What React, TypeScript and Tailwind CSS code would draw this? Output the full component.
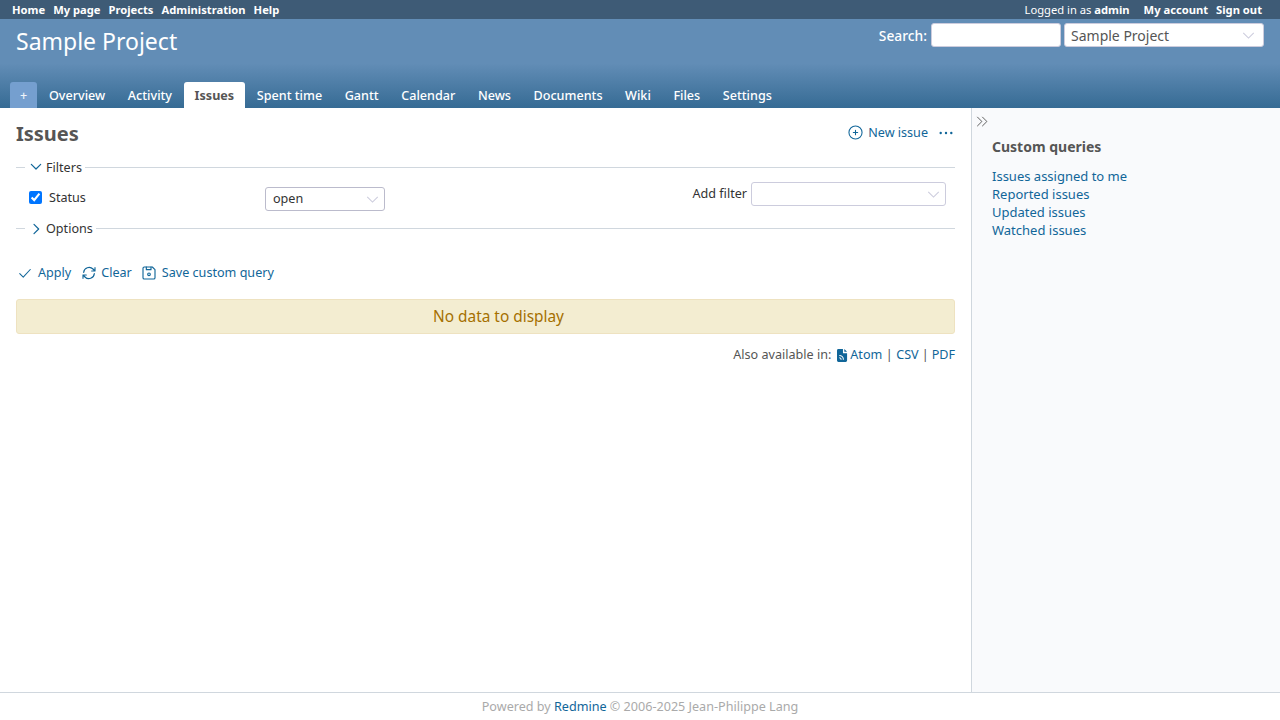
import React from "react";

const Chev = ({ d, className, w = "1.8" }: { d: string; className: string; w?: string }) => (
  <svg viewBox="0 0 24 24" fill="none" stroke="currentColor" strokeWidth={w} strokeLinecap="round" strokeLinejoin="round" className={className}>
    <path d={d} />
  </svg>
);

const tabs = ["Overview", "Activity", "Issues", "Spent time", "Gantt", "Calendar", "News", "Documents", "Wiki", "Files", "Settings"];

const SelectBox = ({ label, className }: { label: string; className: string }) => (
  <div className={`flex items-center justify-between rounded-[3px] border bg-white ${className}`}>
    <span>{label}</span>
    <svg viewBox="0 0 14 8" fill="none" stroke="#ccccdd" strokeWidth="1.2" className="h-[7px] w-[13px]">
      <path d="M1 1l6 6 6-6" />
    </svg>
  </div>
);

export default function App() {
  return (
    <div className="flex h-[720px] w-[1280px] flex-col overflow-hidden bg-white font-['Noto_Sans',sans-serif] text-[12.6px] text-[#333]">
      <div className="flex h-[19px] shrink-0 items-center justify-between bg-[#3e5b76] pl-3 pr-[18px] text-[11.2px] leading-[19px] text-white">
        <div className="flex gap-2 font-bold">
          <span>Home</span>
          <span>My page</span>
          <span>Projects</span>
          <span>Administration</span>
          <span>Help</span>
        </div>
        <div className="flex">
          <span>Logged in as <b>admin</b></span>
          <span className="ml-[14px] font-bold">My account</span>
          <span className="ml-[8px] font-bold">Sign out</span>
        </div>
      </div>

      <div className="flex h-[89px] shrink-0 flex-col justify-between bg-[linear-gradient(180deg,#628db6_0%,#628db6_50%,#366b94_100%)]">
        <div className="flex items-start justify-between pl-4 pr-4">
          <div className="mt-[3px] text-[23px] leading-[38px] text-white">Sample Project</div>
          <div className="mt-1 flex items-center text-[14px]">
            <span className="relative top-px mr-1 text-[13.8px] font-medium text-white">Search:</span>
            <div className="h-6 w-[130px] rounded-[3px] border border-[#ccd] bg-white" />
            <SelectBox label="Sample Project" className="ml-[3px] h-6 w-[200px] border-[#ccd] pl-1.5 pr-[8px] text-[#555]" />
          </div>
        </div>
        <div className="flex h-[26px] pl-2.5 text-[12.6px] leading-[27px] font-medium text-white">
          <div className="mr-0.5 w-[27px] rounded-t-[3px] bg-[#759fcf] text-center text-[#f0f4fa]">+</div>
          {tabs.map((t) =>
            t === "Issues" ? (
              <div key={t} className="-ml-px mr-[1.6px] rounded-t-[3px] bg-white px-[11px] font-bold text-[#555]">{t}</div>
            ) : (
              <div key={t} className="mr-[2.6px] px-2.5">{t}</div>
            )
          )}
        </div>
      </div>

      <div className="flex min-h-0 flex-1">
        <div className="w-[971px] shrink-0 px-4 pt-[10px]">
          <div className="flex h-8 items-center justify-between">
            <h2 className="text-[20px] font-bold text-[#555]">Issues</h2>
            <div className="relative -top-px mr-0.5 flex items-center text-[#169]">
              <svg viewBox="0 0 24 24" fill="none" stroke="currentColor" strokeWidth="1.7" strokeLinecap="round" className="mr-[5px] h-[15px] w-[15px]">
                <circle cx="12" cy="12" r="10.5" />
                <path d="M12 8.5v7M8.5 12h7" />
              </svg>
              <span>New issue</span>
              <svg viewBox="0 0 14 4" fill="currentColor" className="ml-[11px] h-[4px] w-[14px]">
                <circle cx="1.700" cy="2" r="1.200" />
                <circle cx="7" cy="2" r="1.200" />
                <circle cx="12.300" cy="2" r="1.200" />
              </svg>
            </div>
          </div>

          <div className="mt-[8px] flex h-[18px] items-center">
            <div className="h-px w-[9px] bg-[#d0d7de]" />
            <Chev d="M5 8l7 7 7-7" className="ml-[3px] h-[16px] w-[16px] text-[#169]" />
            <span className="relative top-px ml-[2px] mr-[3px]">Filters</span>
            <div className="h-px flex-1 bg-[#d0d7de]" />
          </div>
          <div className="mt-[4px] flex h-[39px] items-start pl-[13px] pr-[9px]">
            <div className="mt-[8px] flex w-[236px] items-center">
              <input type="checkbox" defaultChecked className="h-[13px] w-[13px] accent-[#0075ff]" />
              <span className="relative top-px ml-[7px]">Status</span>
            </div>
            <SelectBox label="open" className="mt-[7px] h-6 w-[120px] border-[#bbbbcc] pl-[7px] pr-[5px]" />
            <div className="flex-1" />
            <div className="mt-[2px] flex items-center">
              <span className="mr-1">Add filter</span>
              <SelectBox label="" className="h-6 w-[195px] border-[#ccd] pr-[5px]" />
            </div>
          </div>
          <div className="flex h-[18px] items-center">
            <div className="h-px w-[9px] bg-[#d0d7de]" />
            <Chev d="M9 5l7 7-7 7" className="relative top-px ml-[3px] h-[16px] w-[16px] text-[#169]" />
            <span className="relative top-px ml-[2px] mr-[3px]">Options</span>
            <div className="h-px flex-1 bg-[#d0d7de]" />
          </div>

          <div className="mt-[27px] flex h-[18px] items-center pl-[2px] text-[#169]">
            <Chev d="M3 13l6 6L21 6" className="mr-[6px] h-[14px] w-[14px]" />
            <span>Apply</span>
            <svg viewBox="0 0 24 24" fill="none" stroke="currentColor" strokeWidth="1.7" strokeLinecap="round" strokeLinejoin="round" className="ml-[10px] mr-[4px] h-[16px] w-[16px]">
              <path d="M4 11a8.200 8.200 0 0 1 14-5l3 3M21 4v5h-5M20 13a8.200 8.200 0 0 1-14 5l-3-3M3 20v-5h5" />
            </svg>
            <span>Clear</span>
            <svg viewBox="0 0 24 24" fill="none" stroke="currentColor" strokeWidth="1.7" strokeLinecap="round" strokeLinejoin="round" className="ml-[9px] mr-[5px] h-[16px] w-[16px]">
              <path d="M5 3h12l4 4v12a2 2 0 0 1-2 2H5a2 2 0 0 1-2-2V5a2 2 0 0 1 2-2z" />
              <path d="M8 3v4h7V3" />
              <circle cx="12" cy="14" r="2" />
            </svg>
            <span>Save custom query</span>
          </div>

          <div className="mt-[17px] flex h-[35px] items-center justify-center rounded-[3px] border border-[#eee2c0] bg-[#f3edd1] pl-[26px] text-[15.4px] text-[#a57000]">
            No data to display
          </div>

          <div className="mt-[12px] flex h-[18px] items-center justify-end text-[#555]">
            <span className="mr-[6px]">Also available in:</span>
            <svg viewBox="0 0 12 14" className="mr-[2px] h-[13px] w-[11px] fill-[#169]">
              <path d="M1.500 0h5v4.500h4.500v8a1.500 1.500 0 0 1-1.500 1.500h-8A1.500 1.500 0 0 1 0 12.500v-11A1.500 1.500 0 0 1 1.500 0z" />
              <path d="M8 0l3 3H8z" />
              <path d="M2.500 7a4.500 4.500 0 0 1 4.500 4.500M2.500 9.500a2 2 0 0 1 2 2" fill="none" stroke="#fff" strokeWidth="1.200" />
            </svg>
            <span className="text-[#169]">Atom</span>
            <span className="mx-[3.5px]">|</span>
            <span className="text-[#169]">CSV</span>
            <span className="mx-[3px]">|</span>
            <span className="text-[#169]">PDF</span>
          </div>
        </div>

        <div className="flex-1 border-l border-[#d0d7de] bg-[#f9fafc] pl-5 pt-[6px]">
          <Chev d="M4 5l7 7-7 7M12 5l7 7-7 7" w="1.500" className="-ml-[17px] h-[15px] w-[15px] text-[#555]" />
          <h3 className="mt-[6px] text-[14px] leading-[24px] font-bold text-[#555]">Custom queries</h3>
          <div className="mt-[8px] flex flex-col text-[13px] leading-[18px] text-[#169]">
            <span>Issues assigned to me</span>
            <span>Reported issues</span>
            <span>Updated issues</span>
            <span>Watched issues</span>
          </div>
        </div>
      </div>

      <div className="h-[28px] shrink-0 border-t border-[#d0d7de] text-center text-[12.6px] leading-[27px] text-[#aaa]">
        Powered by <span className="text-[#169]">Redmine</span> © 2006-2025 Jean-Philippe Lang
      </div>
    </div>
  );
}
